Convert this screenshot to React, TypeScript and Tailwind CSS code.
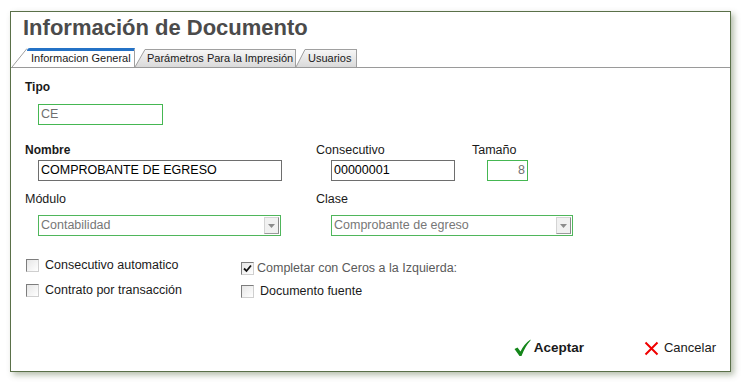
import React from 'react';

const font = { fontFamily: '"Liberation Sans", Arial, sans-serif' };

function TabSlant({ w, h, active, id }: { w: number; h: number; active?: boolean; id: string }) {
  return (
    <svg width={w} height={h} viewBox={`0 0 ${w} ${h}`} className="block shrink-0">
      <defs>
        <linearGradient id={id} x1="0" y1="0" x2="0" y2="1">
          <stop offset="0" stopColor="#f6f6f6" />
          <stop offset="1" stopColor="#dadada" />
        </linearGradient>
      </defs>
      <polygon points={`0,${h} ${w},0 ${w},${h}`} fill={active ? '#ffffff' : `url(#${id})`} />
      <line x1="0" y1={h} x2={w} y2="0.5" stroke="#a0a0a0" strokeWidth="1" />
    </svg>
  );
}

function Checkbox({ checked }: { checked?: boolean }) {
  return (
    <span className="w-[13px] h-[13px] shrink-0 border border-t-[#7d7d7d] border-l-[#7d7d7d] border-r-[#cfcfcf] border-b-[#cfcfcf] bg-gradient-to-br from-[#e6e6e6] to-white flex items-center justify-center">
      {checked && (
        <svg width="9" height="9" viewBox="0 0 9 9">
          <path d="M1 4.5 L3.5 7 L8 1.5" fill="none" stroke="#111" strokeWidth="1.8" />
        </svg>
      )}
    </span>
  );
}

function SelectBox({ value, width }: { value: string; width: string }) {
  return (
    <div className={`${width} h-[21px] border border-[#4fb65b] flex items-center bg-white`}>
      <span className="flex-1 pl-[2px] text-[12.5px] text-[#777] leading-none">{value}</span>
      <span className="w-[15px] h-[17px] mr-[1px] bg-[#f1f1f1] border border-[#d4d4d4] border-r-[#8a8a8a] border-b-[#9a9a9a] flex items-center justify-center">
        <svg width="7" height="4" viewBox="0 0 7 4">
          <polygon points="0,0 7,0 3.5,4" fill="#8c8c8c" />
        </svg>
      </span>
    </div>
  );
}

export default function App() {
  return (
    <div className="w-[748px] h-[386px] bg-white pt-[11px] pl-[10px]" style={font}>
      <div className="w-[721px] h-[361px] border border-[#5a7049] bg-white shadow-[3px_3px_6px_rgba(90,110,70,0.45)] flex flex-col">
        <h1 className="mt-[3px] pl-[12px] h-[26px] text-[22px] leading-[26px] font-bold text-[#4b4b4b]">
          Información de Documento
        </h1>

        <div className="h-[27px] border-b border-[#9a9a9a] flex items-end pl-[1px]">
          <div className="flex items-end h-[19px]">
            <TabSlant w={15} h={19} active id="t1" />
            <div className="w-[108px] h-[19px] border-t-[3px] border-t-[#2472c6] border-r border-r-[#a0a0a0] rounded-tl-[3px] bg-white pl-[4px] text-[11px] leading-[14px] text-[#1a1a1a]">
              Informacion General
            </div>
          </div>
          <div className="flex items-end h-[18px]">
            <TabSlant w={10} h={18} id="t2" />
            <div className="w-[151px] h-[18px] border-t border-r border-[#a0a0a0] bg-gradient-to-b from-[#f6f6f6] to-[#dadada] pl-[2px] text-[11px] leading-[17px] text-[#1a1a1a]">
              Parámetros Para la Impresión
            </div>
          </div>
          <div className="flex items-end h-[18px]">
            <TabSlant w={9} h={18} id="t3" />
            <div className="w-[52px] h-[18px] border-t border-r border-[#a0a0a0] bg-gradient-to-b from-[#f6f6f6] to-[#dadada] pl-[3px] text-[11px] leading-[17px] text-[#1a1a1a]">
              Usuarios
            </div>
          </div>
        </div>

        <div className="pt-[12px] pl-[14px] text-[12px] text-[#1a1a1a]">
          <div className="font-bold leading-[14px]">Tipo</div>
          <div className="mt-[10px] ml-[13px] w-[125px] h-[21px] border border-[#45b752] flex items-center pl-[2px] text-[12.5px] text-[#6f6f6f]">
            CE
          </div>

          <div className="mt-[18px] flex">
            <div className="w-[291px]">
              <div className="font-bold leading-[14px]">Nombre</div>
              <div className="mt-[3px] ml-[13px] w-[244px] h-[21px] border border-[#6e6e6e] flex items-center pl-[2px] text-[12.5px] text-black">
                COMPROBANTE DE EGRESO
              </div>
            </div>
            <div className="w-[156px]">
              <div className="leading-[14px] text-[12.5px]">Consecutivo</div>
              <div className="mt-[3px] ml-[15px] w-[124px] h-[21px] border border-[#6e6e6e] flex items-center pl-[2px] text-[12.5px] text-black">
                00000001
              </div>
            </div>
            <div>
              <div className="leading-[14px] text-[12.5px]">Tamaño</div>
              <div className="mt-[3px] ml-[15px] w-[41px] h-[21px] border border-[#45b752] flex items-center justify-end pr-[2px] text-[12.5px] text-[#6f6f6f]">
                8
              </div>
            </div>
          </div>

          <div className="mt-[11px] flex">
            <div className="w-[291px]">
              <div className="leading-[14px] text-[12.5px]">Módulo</div>
              <div className="mt-[9px] ml-[13px]">
                <SelectBox value="Contabilidad" width="w-[243px]" />
              </div>
            </div>
            <div>
              <div className="leading-[14px] text-[12.5px]">Clase</div>
              <div className="mt-[9px] ml-[15px]">
                <SelectBox value="Comprobante de egreso" width="w-[242px]" />
              </div>
            </div>
          </div>

          <div className="mt-[21px] flex text-[12.5px]">
            <div className="w-[216px] flex flex-col gap-[9px] pl-[1px]">
              <label className="flex items-center gap-[6px] h-[16px] text-[#1a1a1a]">
                <Checkbox />
                Consecutivo automatico
              </label>
              <label className="flex items-center gap-[6px] h-[16px] text-[#1a1a1a]">
                <Checkbox />
                Contrato por transacción
              </label>
            </div>
            <div className="flex flex-col gap-[7px] mt-[3px]">
              <label className="flex items-center gap-[3px] h-[16px] text-[#5a5a5a]">
                <Checkbox checked />
                Completar con Ceros a la Izquierda:
              </label>
              <label className="flex items-center gap-[6px] h-[16px] text-[#1a1a1a]">
                <Checkbox />
                Documento fuente
              </label>
            </div>
          </div>
        </div>

        <div className="mt-auto mb-[13px] h-[20px] flex items-center justify-end pr-[14px]">
          <button className="flex items-center gap-[3px] text-[#1a1a1a] font-bold text-[13.5px]">
            <svg width="17" height="18" viewBox="0 0 17 18">
              <path d="M0.5 10 L3.5 8.5 L6.5 12.5 Q10 5 16.5 0.5 L16.5 1.5 Q11 7.5 7.5 17 L5.5 17 Z" fill="#14861a" />
            </svg>
            Aceptar
          </button>
          <button className="ml-[60px] flex items-center gap-[5px] text-[#1a1a1a] text-[13px]">
            <svg width="15" height="15" viewBox="0 0 15 15">
              <path d="M1.5 1.5 L13.5 13.5 M13.5 1.5 L1.5 13.5" stroke="#f00000" strokeWidth="2" />
            </svg>
            Cancelar
          </button>
        </div>
      </div>
    </div>
  );
}
